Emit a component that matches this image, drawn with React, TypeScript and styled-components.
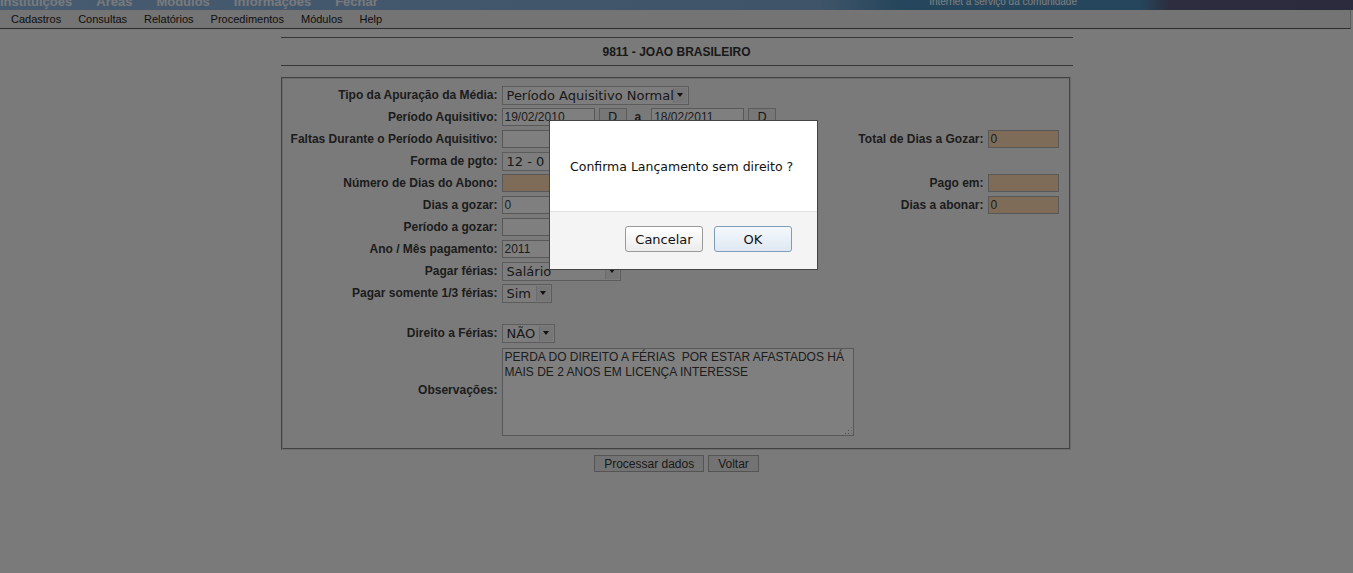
import styled, { createGlobalStyle } from "styled-components";

const GlobalStyle = createGlobalStyle`
  html, body {
    margin: 0;
    padding: 0;
    background: #f4f4f4;
    font-family: "Liberation Sans", Arial, sans-serif;
    font-size: 11px;
    color: #333;
  }
`;

const Banner = styled.div`
  height: 10px;
  overflow: hidden;
  display: flex;
  background: linear-gradient(
    to right,
    #8fb6e0 0,
    #7fa8d2 820px,
    #4a8db8 900px,
    #4a8db8 1140px,
    #5a5a7e 1170px,
    #56567a 100%
  );
`;

const BannerMenu = styled.div`
  display: flex;
  gap: 24px;
  margin-top: -6px;
  height: 16px;
  line-height: 16px;
`;

const BannerItem = styled.span`
  font-size: 13px;
  font-weight: bold;
  color: #f0f4f8;
`;

const BannerSlogan = styled.span`
  margin-left: auto;
  margin-right: 276px;
  margin-top: -5px;
  line-height: 13px;
  font-size: 10px;
  color: #ffffff;
`;

const MenuBar = styled.div`
  height: 18px;
  margin-right: 2px;
  display: flex;
  align-items: center;
  gap: 17px;
  padding-left: 11px;
  background: #e8e8e8;
  border-bottom: 1px solid #5a5a5a;
  border-right: 1px solid #bbb;
`;

const MenuItem = styled.span`
  font-size: 11px;
  color: #222;
`;

const Content = styled.div`
  width: 792px;
  margin: 8px auto 0;
  display: flex;
  flex-direction: column;
  align-items: stretch;
`;

const TitleBar = styled.div`
  height: 27px;
  border-top: 1px solid #6c6c6c;
  border-bottom: 1px solid #6c6c6c;
  display: flex;
  align-items: center;
  justify-content: center;
  font-size: 12px;
  font-weight: bold;
  color: #333;
`;

const Panel = styled.div`
  margin: 11px 2px 0 0;
  border: 2px groove #d8d8d8;
  padding: 5px 10px 12px 0;
  display: grid;
  grid-template-columns: 215px 1fr auto 71px;
  grid-auto-rows: auto;
  column-gap: 4px;
  align-items: center;
`;

const Label = styled.label`
  grid-column: 1;
  text-align: right;
  font-weight: bold;
  font-size: 12px;
  line-height: 22px;
  color: #3a3a3a;
  white-space: nowrap;
`;

const RightLabel = styled(Label)`
  grid-column: 3;
`;

const Field = styled.div<{ $span?: boolean }>`
  grid-column: ${({ $span }) => ($span ? "2 / 5" : "2")};
  display: flex;
  align-items: center;
`;

const RightField = styled.div`
  grid-column: 4;
  display: flex;
`;

const Spacer = styled.div`
  grid-column: 1 / 5;
  height: 18px;
`;

const Input = styled.div<{ $w: number; $tan?: boolean }>`
  box-sizing: border-box;
  width: ${({ $w }) => $w}px;
  height: 18px;
  border: 1px solid #b0b0b0;
  background: ${({ $tan }) => ($tan ? "#fdd9b2" : "#ffffff")};
  font-size: 12px;
  line-height: 16px;
  padding-left: 2px;
  color: #3a3a3a;
  overflow: hidden;
  white-space: nowrap;
`;

const Select = styled.div<{ $w: number }>`
  box-sizing: border-box;
  width: ${({ $w }) => $w}px;
  height: 19px;
  border: 1px solid #b8b8b8;
  background: #fafafa;
  display: flex;
  align-items: center;
  font-family: "DejaVu Sans", sans-serif;
  font-size: 13px;
  color: #333;
  padding-left: 4px;
  overflow: hidden;
  white-space: nowrap;
`;

const SelectText = styled.span`
  flex: 1;
  overflow: hidden;
`;

const SelectArrow = styled.span`
  width: 13px;
  height: 15px;
  margin-right: 1px;
  display: flex;
  align-items: center;
  justify-content: center;
  background: #ececec;
  border-left: 1px solid #d8d8d8;
  &::after {
    content: "";
    border-left: 3px solid transparent;
    border-right: 3px solid transparent;
    border-top: 4px solid #222;
  }
`;

const SmallButton = styled.div`
  box-sizing: border-box;
  width: 28px;
  height: 18px;
  margin-left: 4px;
  border: 1px solid #b8b8b8;
  background: #eeeeee;
  display: flex;
  align-items: center;
  justify-content: center;
  font-family: "DejaVu Sans", sans-serif;
  font-size: 12px;
  color: #333;
`;

const Between = styled.span`
  margin: 0 10px 0 8px;
  font-weight: bold;
  font-size: 12px;
  color: #3a3a3a;
`;

const TextArea = styled.div`
  box-sizing: border-box;
  width: 352px;
  height: 88px;
  margin-top: 4px;
  border: 1px solid #b0b0b0;
  background: #ffffff;
  padding: 1px 2px;
  font-size: 12px;
  line-height: 15px;
  color: #3a3a3a;
  position: relative;
  white-space: pre-wrap;
`;

const Grip = styled.span`
  position: absolute;
  right: 1px;
  bottom: 1px;
  width: 8px;
  height: 8px;
  background: radial-gradient(circle, #999 0.6px, transparent 0.8px) 0 0 / 3px 3px;
  clip-path: polygon(100% 0, 100% 100%, 0 100%);
`;

const ObsRow = styled.div`
  grid-column: 1 / 5;
  display: grid;
  grid-template-columns: 215px 1fr;
  column-gap: 4px;
  align-items: center;
`;

const Actions = styled.div`
  margin-top: 5px;
  display: flex;
  justify-content: center;
  gap: 4px;
`;

const PageButton = styled.div`
  box-sizing: border-box;
  height: 17px;
  padding: 0 9px;
  border: 1px solid #a8a8a8;
  background: #e6e6e6;
  display: flex;
  align-items: center;
  font-size: 12px;
  color: #333;
`;

const Overlay = styled.div`
  position: fixed;
  inset: 0;
  background: rgba(0, 0, 0, 0.5);
`;

const Dialog = styled.div`
  position: fixed;
  left: 549px;
  top: 120px;
  width: 269px;
  height: 150px;
  box-sizing: border-box;
  border: 1px solid #444;
  background: #ffffff;
  display: flex;
  flex-direction: column;
  font-family: "DejaVu Sans", sans-serif;
`;

const DialogBody = styled.div`
  height: 90px;
  display: flex;
  align-items: center;
  padding: 0 0 0 20px;
  font-size: 12.5px;
  color: #111;
  white-space: nowrap;
  border-bottom: 1px solid #e2e2e2;
`;

const DialogFooter = styled.div`
  flex: 1;
  background: #f4f4f4;
  display: flex;
  justify-content: flex-end;
  align-items: flex-start;
  gap: 11px;
  padding: 14px 25px 0 0;
`;

const DialogButton = styled.button<{ $primary?: boolean }>`
  box-sizing: border-box;
  width: 78px;
  height: 26px;
  border-radius: 3px;
  border: 1px solid ${({ $primary }) => ($primary ? "#7f9db9" : "#9a9a9a")};
  background: ${({ $primary }) =>
    $primary
      ? "linear-gradient(#f4f8fc, #dfe8f2)"
      : "linear-gradient(#ffffff, #ececec)"};
  font-family: "DejaVu Sans", sans-serif;
  font-size: 13px;
  color: #111;
  padding: 0;
`;

export default function App() {
  return (
    <>
      <GlobalStyle />
      <Banner>
        <BannerMenu>
          {["Instituições", "Áreas", "Módulos", "Informações", "Fechar"].map(
            (t) => (
              <BannerItem key={t}>{t}</BannerItem>
            )
          )}
        </BannerMenu>
        <BannerSlogan>Internet a serviço da comunidade</BannerSlogan>
      </Banner>
      <MenuBar>
        {[
          "Cadastros",
          "Consultas",
          "Relatórios",
          "Procedimentos",
          "Módulos",
          "Help",
        ].map((t) => (
          <MenuItem key={t}>{t}</MenuItem>
        ))}
      </MenuBar>
      <Content>
        <TitleBar>9811 - JOAO BRASILEIRO</TitleBar>
        <Panel>
          <Label>Tipo da Apuração da Média:</Label>
          <Field $span>
            <Select $w={187}>
              <SelectText>Período Aquisitivo Normal</SelectText>
              <SelectArrow />
            </Select>
          </Field>

          <Label>Período Aquisitivo:</Label>
          <Field $span>
            <Input $w={93}>19/02/2010</Input>
            <SmallButton>D</SmallButton>
            <Between>a</Between>
            <Input $w={93}>18/02/2011</Input>
            <SmallButton>D</SmallButton>
          </Field>

          <Label>Faltas Durante o Período Aquisitivo:</Label>
          <Field>
            <Input $w={93} />
          </Field>
          <RightLabel>Total de Dias a Gozar:</RightLabel>
          <RightField>
            <Input $w={71} $tan>
              0
            </Input>
          </RightField>

          <Label>Forma de pgto:</Label>
          <Field $span>
            <Select $w={240}>
              <SelectText>12 - 0 dias de abono</SelectText>
              <SelectArrow />
            </Select>
          </Field>

          <Label>Número de Dias do Abono:</Label>
          <Field>
            <Input $w={93} $tan />
          </Field>
          <RightLabel>Pago em:</RightLabel>
          <RightField>
            <Input $w={71} $tan />
          </RightField>

          <Label>Dias a gozar:</Label>
          <Field>
            <Input $w={93}>0</Input>
          </Field>
          <RightLabel>Dias a abonar:</RightLabel>
          <RightField>
            <Input $w={71} $tan>
              0
            </Input>
          </RightField>

          <Label>Período a gozar:</Label>
          <Field $span>
            <Input $w={93} />
          </Field>

          <Label>Ano / Mês pagamento:</Label>
          <Field $span>
            <Input $w={93}>2011</Input>
          </Field>

          <Label>Pagar férias:</Label>
          <Field $span>
            <Select $w={119}>
              <SelectText>Salário</SelectText>
              <SelectArrow />
            </Select>
          </Field>

          <Label>Pagar somente 1/3 férias:</Label>
          <Field $span>
            <Select $w={50}>
              <SelectText>Sim</SelectText>
              <SelectArrow />
            </Select>
          </Field>

          <Spacer />

          <Label>Direito a Férias:</Label>
          <Field $span>
            <Select $w={53}>
              <SelectText>NÃO</SelectText>
              <SelectArrow />
            </Select>
          </Field>

          <ObsRow>
            <Label>Observações:</Label>
            <TextArea>
              {
                "PERDA DO DIREITO A FÉRIAS  POR ESTAR AFASTADOS HÁ\nMAIS DE 2 ANOS EM LICENÇA INTERESSE"
              }
              <Grip />
            </TextArea>
          </ObsRow>
        </Panel>
        <Actions>
          <PageButton>Processar dados</PageButton>
          <PageButton>Voltar</PageButton>
        </Actions>
      </Content>
      <Overlay />
      <Dialog role="dialog">
        <DialogBody>Confirma Lançamento sem direito ?</DialogBody>
        <DialogFooter>
          <DialogButton>Cancelar</DialogButton>
          <DialogButton $primary>OK</DialogButton>
        </DialogFooter>
      </Dialog>
    </>
  );
}
